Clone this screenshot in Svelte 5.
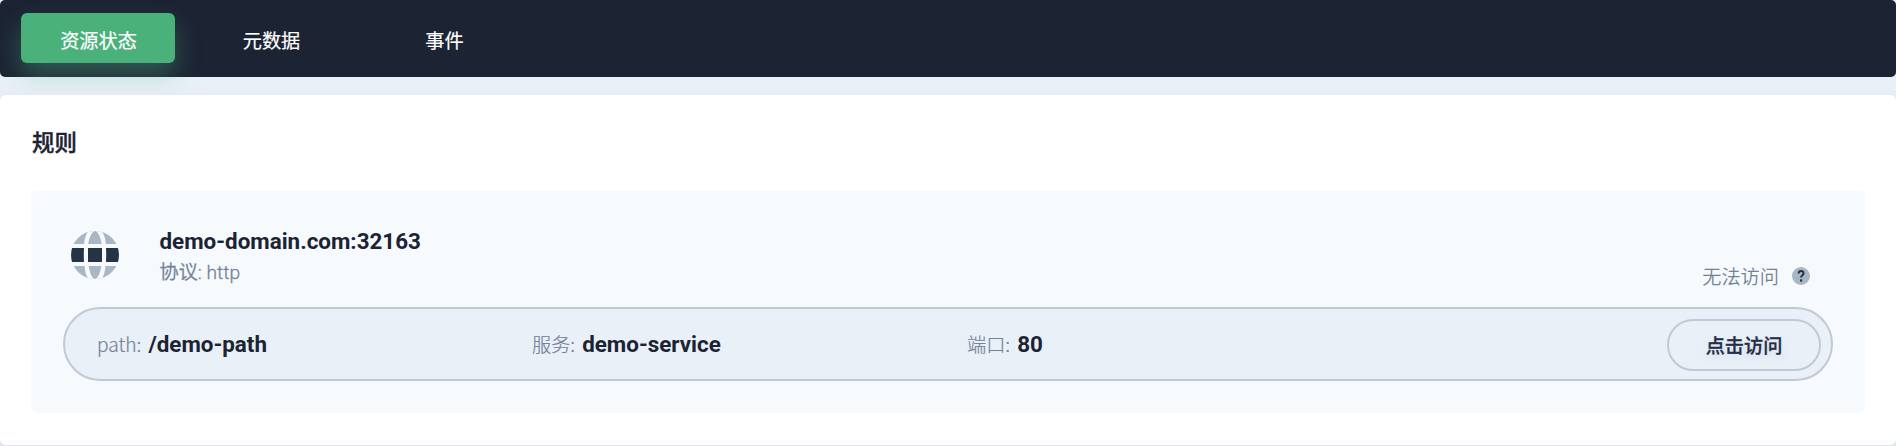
<script>
  const tabs = ['资源状态', '元数据', '事件'];
  const fields = [
    { label: 'path:', value: '/demo-path' },
    { label: '服务:', value: 'demo-service' },
    { label: '端口:', value: '80' }
  ];
  let active = $state(0);
</script>

<div class="page">
  <nav>
    {#each tabs as tab, i}
      <button class="tab" class:active={i === active} onclick={() => (active = i)}>{tab}</button>
    {/each}
  </nav>

  <section class="card">
    <h2>规则</h2>
    <div class="panel">
      <header>
        <svg class="globe" viewBox="0 0 48 48" width="48" height="48">
          <defs>
            <clipPath id="disc"><circle cx="24" cy="24" r="24" /></clipPath>
          </defs>
          <g clip-path="url(#disc)">
            <path fill="#a9b6c4" d="M0 0H48V13H0ZM0 35H48V48H0Z" />
            <path fill="#f6fafd" d="M17.5 0C15 3 13.6 8 13 13H17.3C18.2 7 20.5 1 24 0ZM30.5 0C33 3 34.4 8 35 13H30.7C29.8 7 27.5 1 24 0ZM17.5 48C15 45 14 40 13.5 35H17.7C18.6 41 20.5 47 24 48ZM30.5 48C33 45 34 40 34.5 35H30.3C29.4 41 27.5 47 24 48Z" />
            <path fill="#243444" d="M0 17H13Q12.6 24 13 31H0ZM17 17H31V31H17ZM35 17H48V31H35Q35.4 24 35 17Z" />
          </g>
        </svg>
        <div class="host">
          <strong>demo-domain.com:32163</strong>
          <p>协议: http</p>
        </div>
        <div class="access">
          <span>无法访问</span>
          <svg viewBox="0 0 18 18" width="18" height="18">
            <circle cx="9" cy="9" r="9" fill="#a9b6c4" />
            <path d="M6.6 6.6C6.6 4.9 7.6 4.1 9.1 4.1S11.5 5 11.5 6.4C11.5 8.2 9.1 8.2 9.1 10.6" fill="none" stroke="#243444" stroke-width="2" />
            <rect x="8" y="12.3" width="2.2" height="2.4" rx=".8" fill="#243444" />
          </svg>
        </div>
      </header>
      <div class="rule">
        {#each fields as field}
          <div class="field"><span>{field.label}</span><strong>{field.value}</strong></div>
        {/each}
        <button class="visit">点击访问</button>
      </div>
    </div>
  </section>
</div>

<style>
  :global(body) {
    background: #e9eff7;
  }
  .page {
    height: 446px;
    overflow: hidden;
    background: linear-gradient(#e9f0f8 86px, #e8edf5 95px, #e0e5ee);
    font-family: Roboto, 'Noto Sans CJK SC', sans-serif;
    font-size: 19.2px;
    color: #1c2333;
  }
  button {
    font: inherit;
    padding: 0;
    border: 0;
    background: none;
  }
  nav {
    display: flex;
    gap: 19px;
    height: 77px;
    box-sizing: border-box;
    padding: 13px 21px;
    border-radius: 5px;
    background: #1c2333;
  }
  .tab {
    width: 154px;
    height: 50px;
    padding: 4px 0 0 1px;
    border-radius: 6px;
    color: #fff;
    font-weight: 400;
    -webkit-text-stroke: 0.2px;
  }
  .active {
    background: #4ab17a;
    box-shadow: 0 12.8px 25.6px rgba(85, 188, 138, 0.36);
  }
  .card {
    height: 350px;
    margin-top: 18px;
    padding: 32px 31px;
    box-sizing: border-box;
    border-radius: 6px;
    background: #fff;
    position: relative;
  }
  h2 {
    height: 64px;
    margin: 0 0 0 1px;
    font-size: 22.4px;
    line-height: 32px;
    font-weight: 500;
    -webkit-text-stroke: 0.4px;
  }
  .panel {
    height: 222px;
    box-sizing: border-box;
    padding: 32px;
    border-radius: 6px;
    background: #f6fafd;
  }
  header {
    display: flex;
    height: 84px;
    padding: 8px 23px 0 8px;
    box-sizing: border-box;
  }
  .host {
    margin-left: 40.5px;
  }
  .host strong {
    display: block;
    font-size: 22.4px;
    line-height: 20px;
  }
  .host p {
    margin: 6px 0 0;
    line-height: 32px;
  }
  p,
  .field span,
  .access {
    color: #748298;
  }
  p {
    font-weight: 350;
    -webkit-text-stroke: 0.3px;
  }
  .access {
    display: flex;
    align-items: center;
    gap: 13px;
    height: 30px;
    margin: 30px 0 0 auto;
    font-weight: 350;
  }
  .rule {
    display: flex;
    align-items: center;
    height: 74px;
    box-sizing: border-box;
    padding: 0 10px 0 32px;
    border: 2px solid #c1c9d6;
    border-radius: 37px;
    background: #e9f0f8;
  }
  .field {
    width: 435px;
    padding-bottom: 1px;
    white-space: nowrap;
  }
  .field span {
    margin-right: 7px;
    font-family: 'Noto Sans CJK SC', sans-serif;
    font-weight: 300;
    -webkit-text-stroke: 0.2px;
  }
  .field strong {
    font-size: 22.4px;
  }
  .visit {
    width: 154px;
    height: 52px;
    margin: 2px 0 0 auto;
    border: 2px solid #c1c9d6;
    border-radius: 26px;
    color: #242e48;
    font-weight: 500;
    -webkit-text-stroke: 0.3px;
    text-shadow: 0 4px 8px rgba(36, 46, 66, 0.1);
  }
</style>
